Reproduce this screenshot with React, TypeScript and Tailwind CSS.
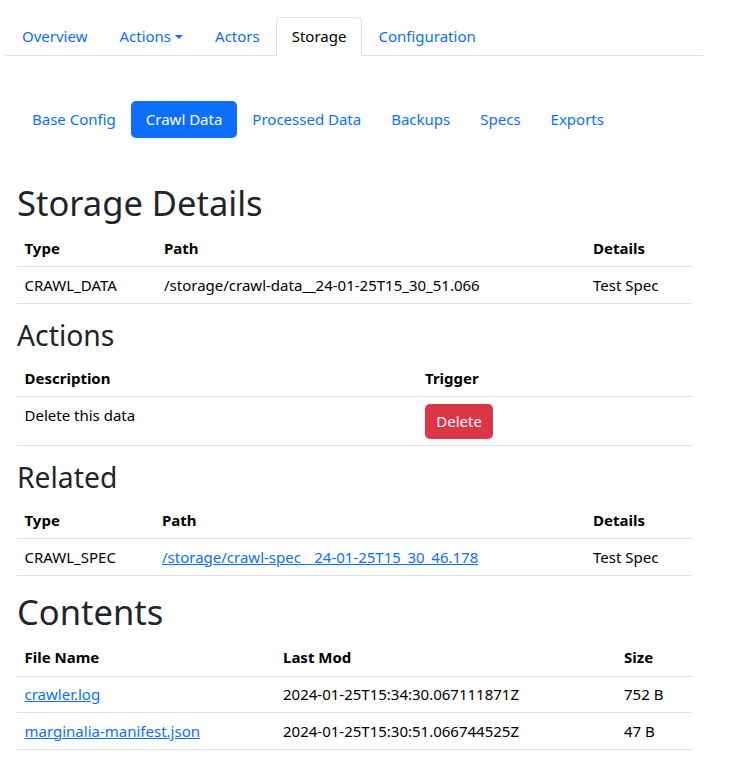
import React from 'react';

const tabs = ['Overview', 'Actions', 'Actors', 'Storage', 'Configuration'];
const pills = ['Base Config', 'Crawl Data', 'Processed Data', 'Backups', 'Specs', 'Exports'];

type Col = { label: string; width: string };

function DataTable({ cols, children }: { cols: Col[]; children: React.ReactNode }) {
  return (
    <table className="w-[675px] table-fixed border-collapse mb-[15px] text-black">
      <thead>
        <tr>
          {cols.map((c) => (
            <th
              key={c.label}
              className={`${c.width} text-left font-bold px-[7.5px] py-[6.6px] leading-[22.5px] border-b border-[#dee2e6] align-top`}
            >
              {c.label}
            </th>
          ))}
        </tr>
      </thead>
      <tbody>{children}</tbody>
    </table>
  );
}

function Td({ children }: { children?: React.ReactNode }) {
  return (
    <td className="px-[7.5px] py-[6.6px] leading-[22.5px] border-b border-[#dee2e6] align-top">{children}</td>
  );
}

function Link({ children }: { children: React.ReactNode }) {
  return (
    <a href="#" className="text-[#0d6efd] underline">
      {children}
    </a>
  );
}

export default function App() {
  return (
    <div className="bg-white min-h-[763px] text-[15px] leading-[22.5px] text-[#212529] font-['Noto_Sans',sans-serif] pt-[17px]">
      <ul className="ml-[5px] w-[698px] flex border-b border-[#dee2e6] pl-px">
        {tabs.map((t) => {
          const active = t === 'Storage';
          return (
            <li key={t} className="-mb-px">
              <a
                href="#"
                className={
                  active
                    ? 'flex items-center px-[15px] py-[7px] border border-[#dee2e6] border-b-white rounded-t-[5px] bg-white text-black'
                    : 'flex items-center px-[15px] py-[7px] border border-transparent text-[#0d6efd]'
                }
              >
                {t}
                {t === 'Actions' && (
                  <span className="ml-[4px] inline-block w-0 h-0 border-l-[4.5px] border-r-[4.5px] border-t-[4.5px] border-l-transparent border-r-transparent border-t-[#0d6efd] mt-[1px]" />
                )}
              </a>
            </li>
          );
        })}
      </ul>

      <div className="ml-[17px] w-[675px]">
        <ul className="flex mt-[45.5px]">
          {pills.map((p) => {
            const active = p === 'Crawl Data';
            return (
              <li key={p}>
                <a
                  href="#"
                  className={
                    active
                      ? 'block px-[15px] py-[7px] rounded-[5px] bg-[#0d6efd] text-white'
                      : 'block px-[15px] py-[7px] text-[#0d6efd]'
                  }
                >
                  {p}
                </a>
              </li>
            );
          })}
        </ul>

        <h1 className="mt-[44px] mb-[7.5px] text-[34.5px] leading-[1.2] font-normal">Storage Details</h1>
        <DataTable
          cols={[
            { label: 'Type', width: 'w-[139.5px]' },
            { label: 'Path', width: 'w-[429px]' },
            { label: 'Details', width: 'w-[106.5px]' },
          ]}
        >
          <tr>
            <Td>CRAWL_DATA</Td>
            <Td>/storage/crawl-data__24-01-25T15_30_51.066</Td>
            <Td>Test Spec</Td>
          </tr>
        </DataTable>

        <h2 className="mb-[7.5px] text-[28.3px] leading-[1.2] font-normal">Actions</h2>
        <DataTable
          cols={[
            { label: 'Description', width: 'w-[400.5px]' },
            { label: 'Trigger', width: 'w-[274.5px]' },
          ]}
        >
          <tr>
            <Td>Delete this data</Td>
            <Td>
              <button className="h-[35px] px-[11.25px] rounded-[5px] bg-[#dc3545] text-white leading-[22.5px]">
                Delete
              </button>
            </Td>
          </tr>
        </DataTable>

        <h2 className="mb-[7.5px] text-[28.3px] leading-[1.2] font-normal">Related</h2>
        <DataTable
          cols={[
            { label: 'Type', width: 'w-[137.5px]' },
            { label: 'Path', width: 'w-[431px]' },
            { label: 'Details', width: 'w-[106.5px]' },
          ]}
        >
          <tr>
            <Td>CRAWL_SPEC</Td>
            <Td>
              <Link>/storage/crawl-spec__24-01-25T15_30_46.178</Link>
            </Td>
            <Td>Test Spec</Td>
          </tr>
        </DataTable>

        <h1 className="mb-[7.5px] text-[34.5px] leading-[1.2] font-normal">Contents</h1>
        <DataTable
          cols={[
            { label: 'File Name', width: 'w-[258.5px]' },
            { label: 'Last Mod', width: 'w-[341px]' },
            { label: 'Size', width: 'w-[75.5px]' },
          ]}
        >
          <tr>
            <Td>
              <Link>crawler.log</Link>
            </Td>
            <Td>2024-01-25T15:34:30.067111871Z</Td>
            <Td>752 B</Td>
          </tr>
          <tr>
            <Td>
              <Link>marginalia-manifest.json</Link>
            </Td>
            <Td>2024-01-25T15:30:51.066744525Z</Td>
            <Td>47 B</Td>
          </tr>
        </DataTable>
      </div>
    </div>
  );
}
